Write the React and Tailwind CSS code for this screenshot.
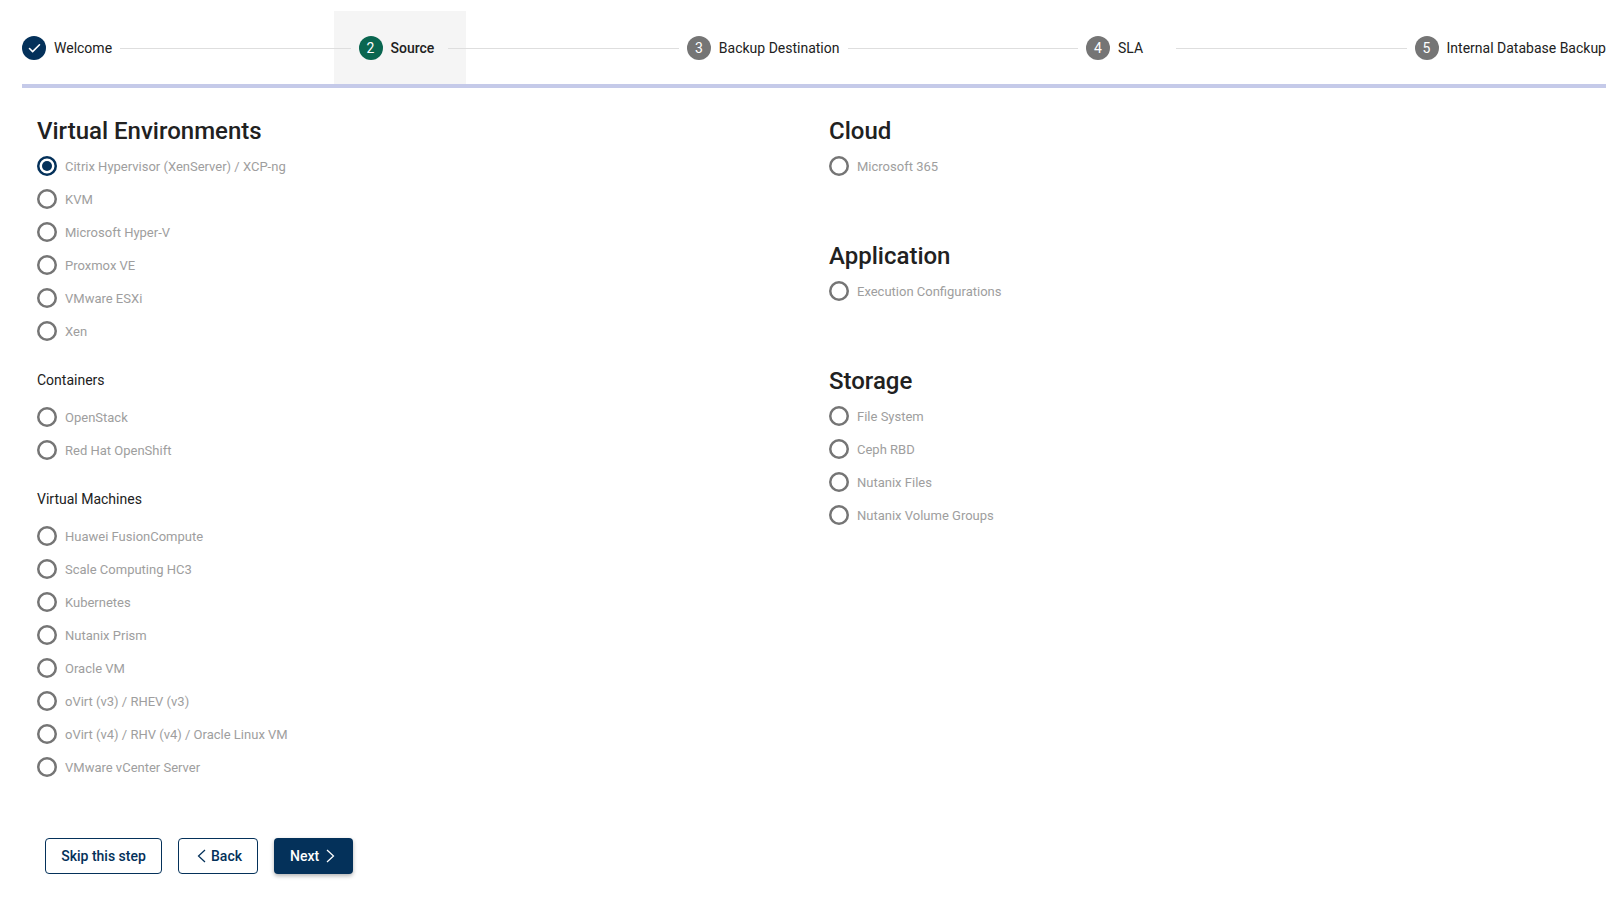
import { Check } from "lucide-react";

const virtualEnvs = [
  "Citrix Hypervisor (XenServer) / XCP-ng",
  "KVM",
  "Microsoft Hyper-V",
  "Proxmox VE",
  "VMware ESXi",
  "Xen",
];
const containers = ["OpenStack", "Red Hat OpenShift"];
const virtualMachines = [
  "Huawei FusionCompute",
  "Scale Computing HC3",
  "Kubernetes",
  "Nutanix Prism",
  "Oracle VM",
  "oVirt (v3) / RHEV (v3)",
  "oVirt (v4) / RHV (v4) / Oracle Linux VM",
  "VMware vCenter Server",
];
const storage = ["File System", "Ceph RBD", "Nutanix Files", "Nutanix Volume Groups"];

function Line() {
  return <div className="relative z-10 h-px flex-1 bg-[#dedede]" />;
}

function Step({ label, number }) {
  return (
    <div className="mx-2 flex items-center gap-2">
      <div className="flex h-6 w-6 shrink-0 items-center justify-center rounded-full bg-[#757575] text-sm text-white">
        {number}
      </div>
      <span className="whitespace-nowrap text-sm text-[#212121]">{label}</span>
    </div>
  );
}

function Radio({ label, checked }) {
  return (
    <div className="flex h-[33px] items-start gap-2 pt-[6px]">
      <div
        className={
          checked
            ? "flex h-5 w-5 items-center justify-center rounded-full shadow-[inset_0_0_0_2.5px_#04315a]"
            : "h-5 w-5 rounded-full shadow-[inset_0_0_0_2.5px_#757575]"
        }
      >
        {checked && <div className="h-2.5 w-2.5 rounded-full bg-[#04315a]" />}
      </div>
      <span className="mt-px text-[13px] leading-5 text-[#9e9e9e]">{label}</span>
    </div>
  );
}

function Heading({ children }) {
  return <h2 className="h-9 text-2xl leading-[34px] font-medium text-[#212121]">{children}</h2>;
}

function SubHeading({ children }) {
  return <h3 className="h-[53px] pt-[21px] text-sm leading-[22px] text-[#212121]">{children}</h3>;
}

export default function App() {
  return (
    <div className="h-[907px] w-[1624px] overflow-hidden bg-white font-['Roboto',sans-serif]">
      {/* Stepper */}
      <div className="mr-[18px] ml-[22px] flex h-[88px] items-center border-b-4 border-[#c5cae9] pt-3">
        <div className="mr-2 flex items-center gap-2">
          <div className="flex h-6 w-6 shrink-0 items-center justify-center rounded-full bg-[#04315a] text-white">
            <Check size={15} strokeWidth={2.5} />
          </div>
          <span className="text-sm text-[#212121]">Welcome</span>
        </div>
        <Line />
        <div className="relative mx-2 flex items-center gap-2 pr-1.5">
          <div className="absolute top-[-25px] right-[-26px] bottom-[-24px] left-[-25px] bg-[#f5f5f5]" />
          <div className="relative flex h-6 w-6 shrink-0 items-center justify-center rounded-full bg-[#0a6650] text-sm text-white">
            2
          </div>
          <span className="relative text-sm font-medium text-[#212121]">Source</span>
        </div>
        <Line />
        <Step label="Backup Destination" number={3} />
        <Line />
        <div className="mr-[25px]">
          <Step label="SLA" number={4} />
        </div>
        <Line />
        <div className="ml-2 flex items-center gap-2">
          <div className="flex h-6 w-6 shrink-0 items-center justify-center rounded-full bg-[#757575] text-sm text-white">
            5
          </div>
          <span className="whitespace-nowrap text-sm text-[#212121]">Internal Database Backup</span>
        </div>
      </div>

      {/* Source options */}
      <div className="mt-[26px] ml-[37px] flex">
        <div className="w-[792px]">
          <Heading>Virtual Environments</Heading>
          {virtualEnvs.map((item, i) => (
            <Radio key={item} label={item} checked={i === 0} />
          ))}
          <SubHeading>Containers</SubHeading>
          {containers.map((item) => (
            <Radio key={item} label={item} />
          ))}
          <SubHeading>Virtual Machines</SubHeading>
          {virtualMachines.map((item) => (
            <Radio key={item} label={item} />
          ))}
        </div>
        <div className="flex flex-col gap-14">
          <div>
            <Heading>Cloud</Heading>
            <Radio label="Microsoft 365" />
          </div>
          <div>
            <Heading>Application</Heading>
            <Radio label="Execution Configurations" />
          </div>
          <div>
            <Heading>Storage</Heading>
            {storage.map((item) => (
              <Radio key={item} label={item} />
            ))}
          </div>
        </div>
      </div>

      {/* Actions */}
      <div className="mt-[54px] ml-[45px] flex gap-4">
        <button className="h-9 w-[117px] rounded border border-[#04315a] text-sm font-medium text-[#04315a]">
          Skip this step
        </button>
        <button className="flex h-9 w-20 items-center gap-[5px] rounded border border-[#04315a] pl-[18px] text-sm font-medium text-[#04315a]">
          <svg width="9" height="14" viewBox="0 0 9 14" fill="none" stroke="currentColor" strokeWidth="1.25">
            <path d="M8 1L1.5 7 8 13" />
          </svg>
          Back
        </button>
        <button className="flex h-9 w-[79px] items-center gap-[7px] rounded bg-[#04315a] pl-4 text-sm font-medium text-white shadow-[0_2px_4px_rgba(0,0,0,0.3)]">
          Next
          <svg width="9" height="14" viewBox="0 0 9 14" fill="none" stroke="currentColor" strokeWidth="1.25">
            <path d="M1 1l6.5 6L1 13" />
          </svg>
        </button>
      </div>
    </div>
  );
}
